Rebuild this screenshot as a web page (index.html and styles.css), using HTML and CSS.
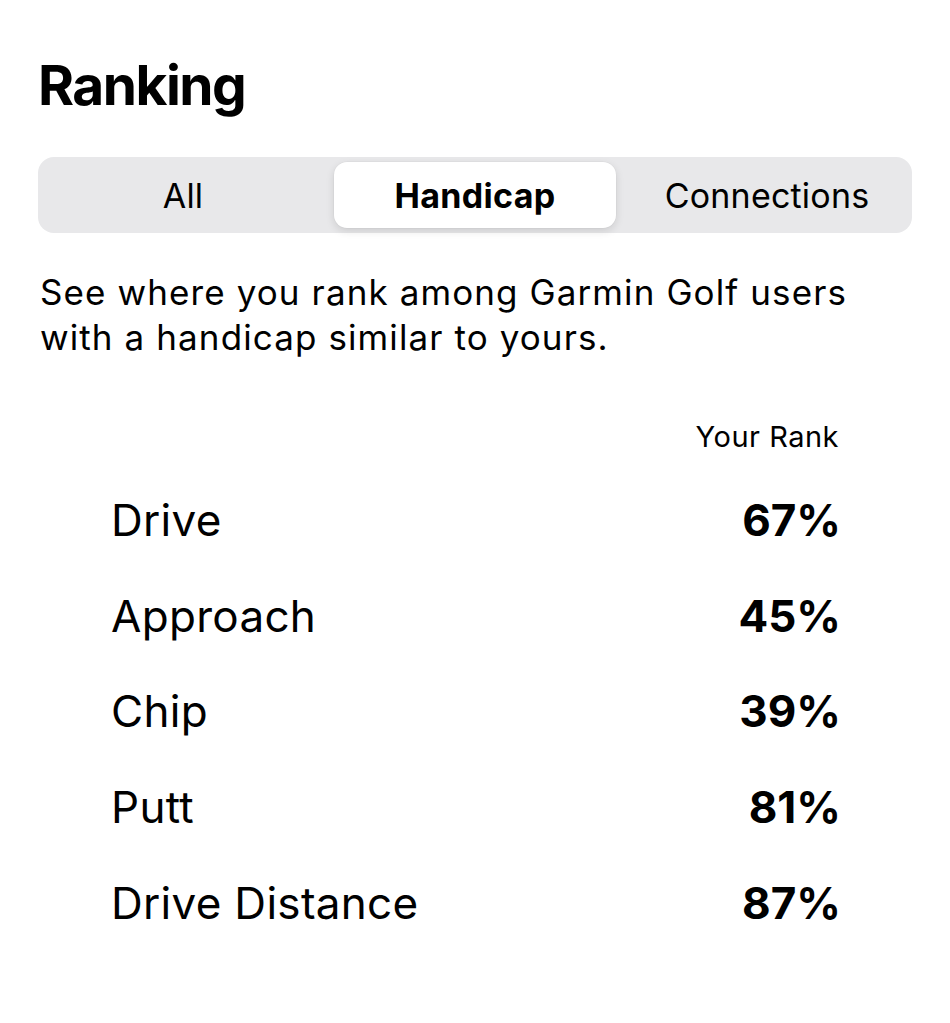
FILE: index.html
```html
<!DOCTYPE html>
<html lang="en">
<head>
<meta charset="utf-8">
<title>Ranking</title>
<link rel="stylesheet" href="styles.css">
</head>
<body>
<main class="page">
  <h1 class="title">Ranking</h1>
  <div class="segmented">
    <div class="seg seg-first">All</div>
    <div class="seg seg-active">Handicap</div>
    <div class="seg seg-last">Connections</div>
  </div>
  <p class="desc">See where you rank among Garmin Golf users with a handicap similar to yours.</p>
  <section class="ranks">
    <div class="ranks-head">Your Rank</div>
    <div class="rank-row"><span class="label">Drive</span><span class="value">67%</span></div>
    <div class="rank-row"><span class="label">Approach</span><span class="value">45%</span></div>
    <div class="rank-row"><span class="label">Chip</span><span class="value">39%</span></div>
    <div class="rank-row"><span class="label">Putt</span><span class="value">81%</span></div>
    <div class="rank-row"><span class="label">Drive Distance</span><span class="value">87%</span></div>
  </section>
</main>
</body>
</html>
```
FILE: styles.css
```css
html, body {
  margin: 0;
  padding: 0;
  background: #ffffff;
}
body {
  font-family: Inter, "Noto Sans", "Liberation Sans", sans-serif;
  color: #000000;
}
.page {
  padding: 0 38px;
  width: 874px;
}
.title {
  margin: 0;
  padding-top: 58px;
  font-size: 55px;
  line-height: 55px;
  font-weight: 700;
  letter-spacing: -1.5px;
}
.segmented {
  margin-top: 44px;
  height: 76px;
  box-sizing: border-box;
  padding: 5px;
  background: #e8e8ea;
  border-radius: 16px;
  display: grid;
  grid-template-columns: 1fr 1fr 1fr;
}
.seg {
  display: flex;
  align-items: center;
  justify-content: center;
  font-size: 34px;
  font-weight: 400;
  letter-spacing: 0.2px;
  border-radius: 13px;
}
.seg-first {
  padding-right: 8px;
}
.seg-last {
  padding-left: 8px;
}
.seg-active {
  margin: 0 3px;
  background: #ffffff;
  font-weight: 700;
  letter-spacing: 0.3px;
  box-shadow: 0 3px 8px rgba(0, 0, 0, 0.12), 0 0 0 0.5px rgba(0, 0, 0, 0.04);
}
.desc {
  margin: 37px 0 0 2px;
  width: 860px;
  font-size: 35px;
  line-height: 45px;
  letter-spacing: 1.1px;
}
.ranks {
  margin-top: 57px;
  padding: 0 71px 0 73px;
}
.ranks-head {
  margin: 0 2px 15px 0;
  text-align: right;
  font-size: 29px;
  line-height: 40px;
  letter-spacing: 0.5px;
}
.rank-row {
  display: flex;
  justify-content: space-between;
  align-items: center;
  height: 95.75px;
  font-size: 44px;
  letter-spacing: 0.3px;
}
.label {
  font-weight: 400;
}
.value {
  font-weight: 700;
  letter-spacing: 0;
}
```
